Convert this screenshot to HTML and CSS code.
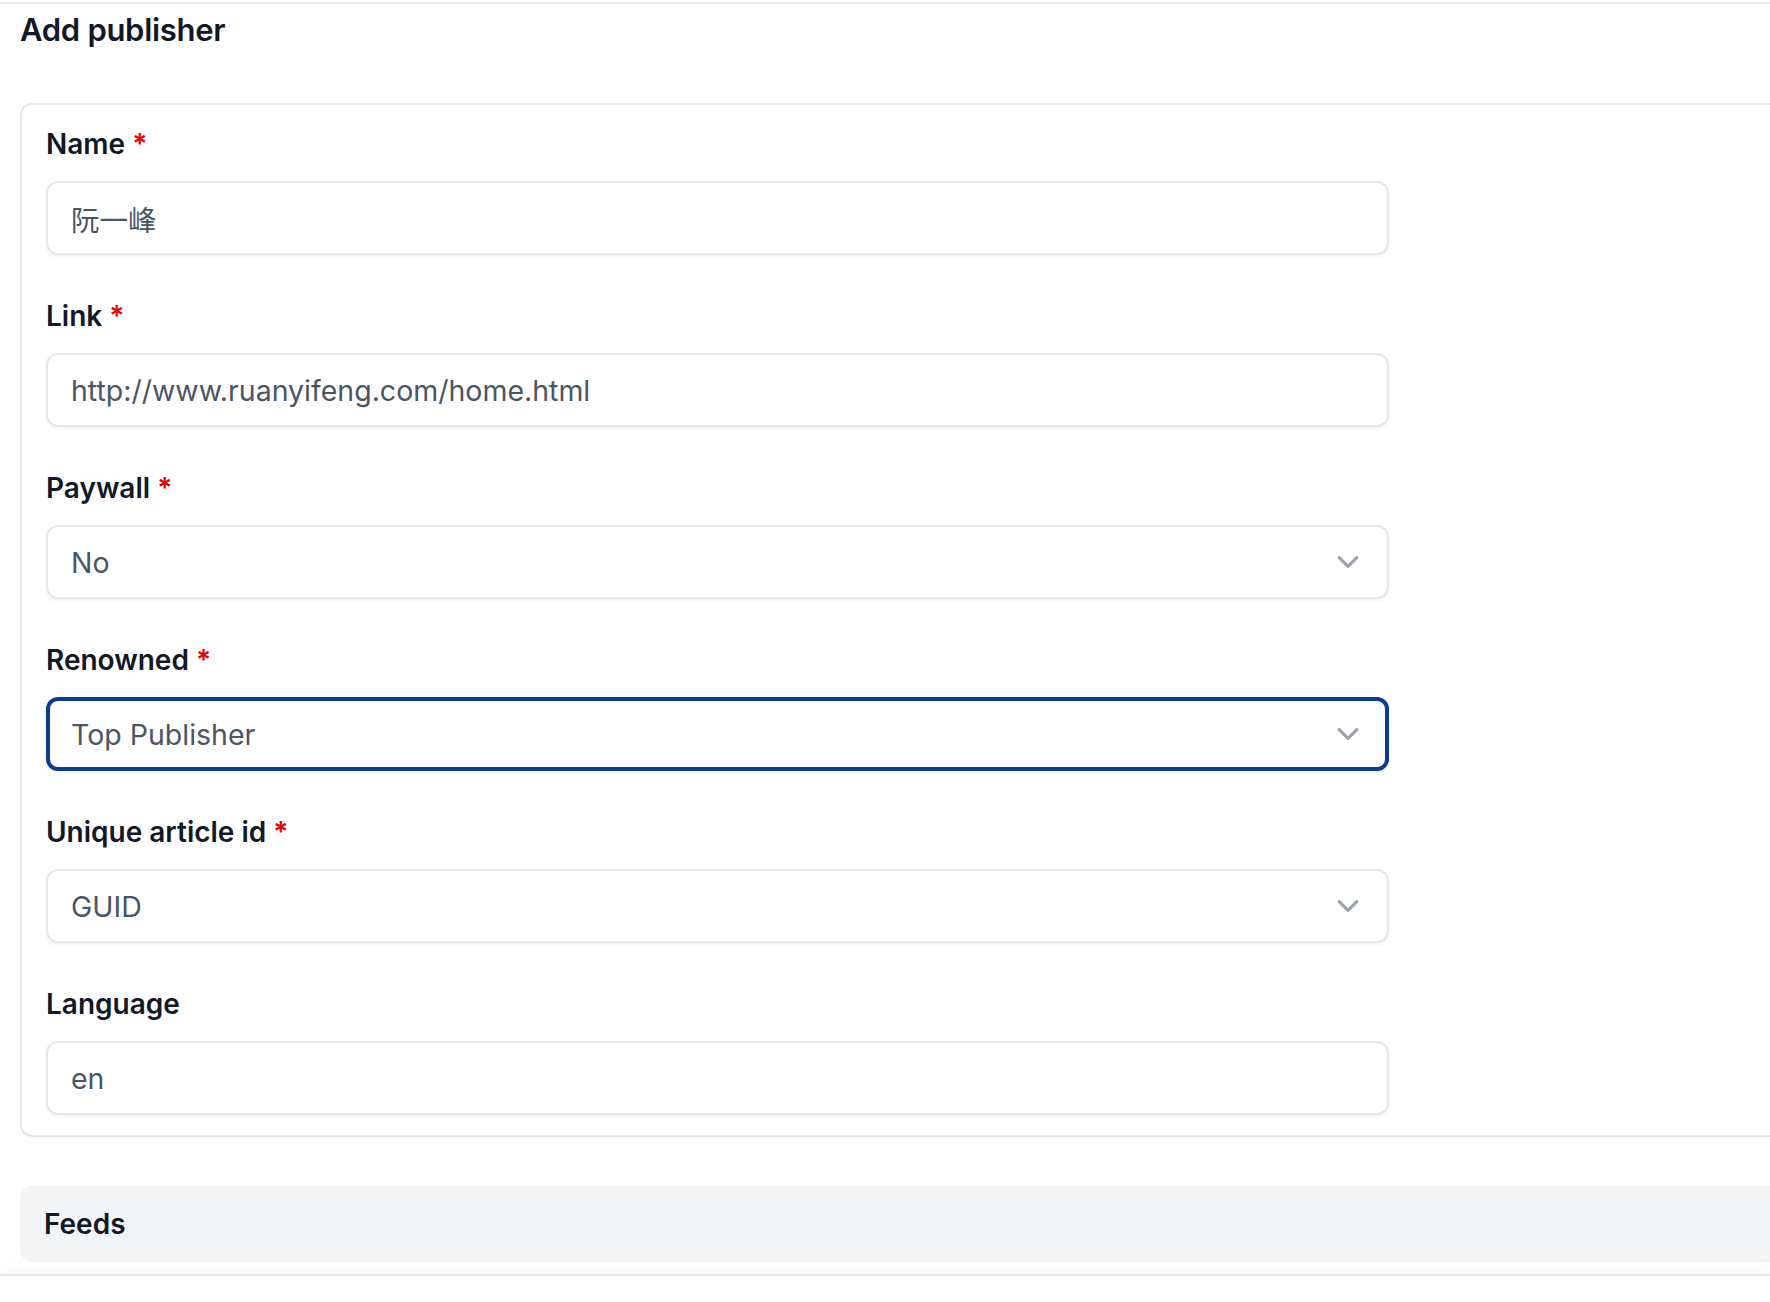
FILE: index.html
```html
<!DOCTYPE html>
<html lang="en">
  <head>
    <meta charset="UTF-8" />
    <meta name="viewport" content="width=device-width, initial-scale=1.0" />
    <title>Add publisher</title>
    <link rel="stylesheet" href="styles.css">
  </head>
  <body>
    <div class="topline"></div>

    <div class="page">
      <h2 class="title">Add publisher</h2>

      <form class="card" id="publisherForm">
        <div class="field">
          <label for="name">Name <span class="req">*</span></label>
          <input type="text" id="name" name="name" value="阮一峰" />
        </div>

        <div class="field">
          <label for="link">Link <span class="req">*</span></label>
          <input type="text" id="link" name="link" value="http://www.ruanyifeng.com/home.html" />
        </div>

        <div class="field">
          <label for="paywall">Paywall <span class="req">*</span></label>
          <div class="select">
            <select id="paywall" name="paywall">
              <option value="no">No</option>
              <option value="yes">Yes</option>
            </select>
            <svg class="chevron" viewBox="0 0 24 24" fill="none"><path d="M19.5 8.25l-7.5 7.5-7.5-7.5" /></svg>
          </div>
        </div>

        <div class="field">
          <label for="renowned">Renowned <span class="req">*</span></label>
          <div class="select focused">
            <select id="renowned" name="renowned">
              <option value="top">Top Publisher</option>
              <option value="regular">Regular</option>
            </select>
            <svg class="chevron" viewBox="0 0 24 24" fill="none"><path d="M19.5 8.25l-7.5 7.5-7.5-7.5" /></svg>
          </div>
        </div>

        <div class="field">
          <label for="uniqueId">Unique article id <span class="req">*</span></label>
          <div class="select">
            <select id="uniqueId" name="uniqueId">
              <option value="guid">GUID</option>
              <option value="link">Link</option>
            </select>
            <svg class="chevron" viewBox="0 0 24 24" fill="none"><path d="M19.5 8.25l-7.5 7.5-7.5-7.5" /></svg>
          </div>
        </div>

        <div class="field">
          <label for="language">Language</label>
          <input type="text" id="language" name="language" value="en" />
        </div>
      </form>

      <div class="section">Feeds</div>
    </div>

    <div class="footer"></div>
  </body>
</html>
```

FILE: styles.css
```css
body {
  font-family: Inter, "Noto Sans CJK SC", sans-serif;
  margin: 0;
  color: #111827;
  background: #fff;
  overflow: hidden;
}

.topline {
  height: 2px;
  margin-top: 2px;
  background: #e5e7eb;
}

.page {
  padding-left: 20px;
}

.title {
  margin: 6px 0 53px;
  font-size: 31px;
  line-height: 40px;
  font-weight: 600;
  letter-spacing: -0.3px;
}

.card {
  margin-right: -40px;
  padding: 19px 24px 20px;
  border: 2px solid #e5e7eb;
  border-radius: 12px;
  box-shadow: 0 2px 4px rgba(0, 0, 0, 0.03);
}

.field {
  display: flex;
  flex-direction: column;
  margin-bottom: 41px;
}

.field:last-child {
  margin-bottom: 0;
}

label {
  display: block;
  margin-bottom: 17px;
  font-size: 28px;
  line-height: 40px;
  font-weight: 600;
}

.req {
  color: #e60000;
}

input[type="text"],
.select {
  width: 1343px;
  height: 74px;
  box-sizing: border-box;
  border: 2px solid #e5e7eb;
  border-radius: 12px;
  box-shadow: 0 2px 4px rgba(0, 0, 0, 0.05);
  background: #fff;
}

input[type="text"] {
  padding: 0 23px;
  font-family: Inter, "Noto Sans CJK SC", sans-serif;
  font-size: 28.5px;
  color: #4b5563;
  outline: none;
}

.select {
  display: flex;
  align-items: center;
  padding: 0 25px 0 23px;
}

.select select {
  flex: 1;
  appearance: none;
  border: none;
  background: transparent;
  padding: 0;
  font-family: Inter, sans-serif;
  font-size: 28.5px;
  color: #4b5563;
  outline: none;
}

.select.focused {
  border: 4px solid #0a3d91;
  padding: 0 23px 0 21px;
}

.chevron {
  width: 28px;
  height: 28px;
  stroke: #9ca3af;
  stroke-width: 2.8;
  stroke-linecap: round;
  stroke-linejoin: round;
}

.section {
  margin: 49px -40px 0 0;
  height: 76px;
  padding: 0 24px;
  display: flex;
  align-items: center;
  background: #f3f4f6;
  border-radius: 12px;
  font-size: 28px;
  font-weight: 600;
}

.footer {
  margin-top: 12px;
  height: 40px;
  border-top: 2px solid #e5e7eb;
  background: #fff;
  box-shadow: 0 -8px 12px rgba(0, 0, 0, 0.025);
}
```
